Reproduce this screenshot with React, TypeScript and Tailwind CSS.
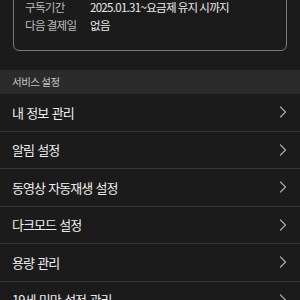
import { ReactNode } from "react";

const font = { fontFamily: '"Noto Sans CJK KR", "Noto Sans", sans-serif' };

function Chevron() {
  return (
    <svg width="8" height="12" viewBox="0 0 8 12" fill="none" className="shrink-0">
      <path d="M1.5 1 L6.5 6 L1.5 11" stroke="#a8a8a8" strokeWidth="1.2" strokeLinecap="round" strokeLinejoin="round" />
    </svg>
  );
}

function InfoRow({ label, children }: { label: string; children: ReactNode }) {
  return (
    <div className="flex items-center h-[18px] text-[11.5px] tracking-[-0.7px]">
      <span className="w-[65px] shrink-0 text-[#bdbdbd]">{label}</span>
      <span className="text-[#ececec]">{children}</span>
    </div>
  );
}

const items = ["내 정보 관리", "알림 설정", "동영상 자동재생 설정", "다크모드 설정", "용량 관리", "19세 미만 설정 관리"];

export default function App() {
  return (
    <div className="w-[300px] h-[300px] overflow-hidden bg-[#1b1b1b]" style={font}>
      {/* 구독 정보 */}
      <div className="px-[13px]">
        <div className="-mt-[10px] pt-[8px] pb-[15px] pl-[11px] border border-[#7a7a7a] rounded-[6px]">
          <InfoRow label="구독기간">2025.01.31~요금제 유지 시까지</InfoRow>
          <InfoRow label="다음 결제일">없음</InfoRow>
        </div>
      </div>

      {/* 서비스 설정 */}
      <div className="mt-[19px] h-[24px] bg-[#2b2b2b] flex items-center px-[12px]">
        <span className="text-[10.5px] tracking-[-0.5px] text-[#c4c4c4]">서비스 설정</span>
      </div>

      <div>
        {items.map((item) => (
          <div key={item} className="h-[37.5px] flex items-center justify-between pl-[12px] pr-[13px] border-b border-[#363636]">
            <span className="text-[13px] tracking-[-1px] [word-spacing:1.5px] text-[#efefef]">{item}</span>
            <Chevron />
          </div>
        ))}
      </div>
    </div>
  );
}
